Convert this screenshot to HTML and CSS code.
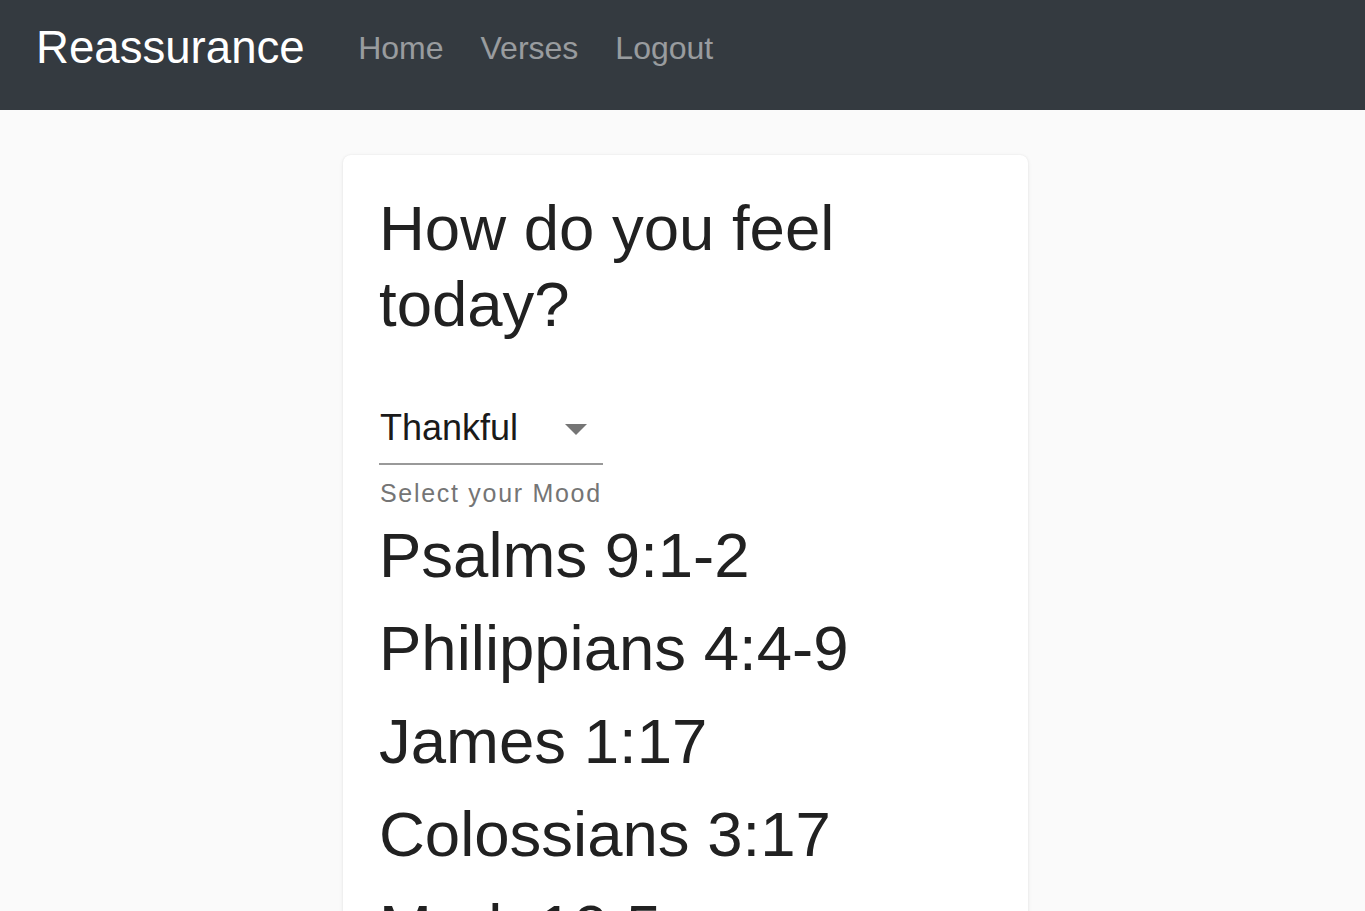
FILE: index.html
```html
<!DOCTYPE html>
<html lang="en">
<head>
<meta charset="utf-8">
<title>Reassurance</title>
<link rel="stylesheet" href="styles.css">
</head>
<body>
<nav class="navbar">
  <a class="brand" href="#">Reassurance</a>
  <ul class="nav-links">
    <li><a href="#">Home</a></li>
    <li><a href="#">Verses</a></li>
    <li><a href="#">Logout</a></li>
  </ul>
</nav>
<main class="page">
  <section class="card">
    <h1 class="title">How do you feel today?</h1>
    <div class="mood-field">
      <div class="select">
        <span class="select-value">Thankful</span>
        <span class="select-arrow"></span>
      </div>
      <p class="helper">Select your Mood</p>
    </div>
    <ul class="verses">
      <li>Psalms 9:1-2</li>
      <li>Philippians 4:4-9</li>
      <li>James 1:17</li>
      <li>Colossians 3:17</li>
      <li>Mark 10:5</li>
    </ul>
  </section>
</main>
</body>
</html>
```
FILE: styles.css
```css
* { box-sizing: border-box; }
html, body { margin: 0; padding: 0; }
body {
  background: #fafafa;
  font-family: "Liberation Sans", Arial, sans-serif;
  color: #212121;
  overflow: hidden;
}
.navbar {
  height: 110px;
  background: #343a40;
  display: flex;
  align-items: center;
  padding: 0 36px 14px;
}
.brand {
  color: #fff;
  text-decoration: none;
  font-size: 45.6px;
  margin-right: 35px;
}
.nav-links {
  list-style: none;
  margin: 0;
  padding: 0;
  display: flex;
}
.nav-links a {
  display: block;
  color: rgba(255,255,255,0.5);
  text-decoration: none;
  font-size: 32px;
  padding: 0 18.5px;
}
.page {
  padding-top: 45px;
  display: flex;
  justify-content: center;
  padding-left: 6px;
}
.card {
  width: 685px;
  background: #fff;
  border-radius: 8px;
  box-shadow: 0 1px 4px rgba(0,0,0,0.08), 0 0 2px rgba(0,0,0,0.06);
  padding: 35px 36px 40px;
}
.title {
  font-size: 63.5px;
  line-height: 76px;
  font-weight: normal;
  margin: 0;
  color: #212121;
  width: 500px;
}
.mood-field {
  margin-top: 65px;
  width: 224px;
}
.select {
  display: flex;
  align-items: center;
  justify-content: space-between;
  border-bottom: 2px solid #999;
  padding: 0 16px 14px 1px;
  height: 58px;
}
.select-value {
  font-size: 36px;
  line-height: 42px;
  color: #1a1a1a;
}
.select-arrow {
  width: 0;
  height: 0;
  border-left: 11px solid transparent;
  border-right: 11px solid transparent;
  border-top: 11px solid #757575;
  margin-top: 2px;
}
.helper {
  margin: 14px 0 0 1px;
  font-size: 25px;
  letter-spacing: 1.7px;
  color: #757575;
  white-space: nowrap;
}
.verses {
  list-style: none;
  margin: 9px 0 0;
  padding: 0;
}
.verses li {
  font-size: 63.5px;
  line-height: 76px;
  margin-bottom: 17px;
  color: #212121;
}
```
